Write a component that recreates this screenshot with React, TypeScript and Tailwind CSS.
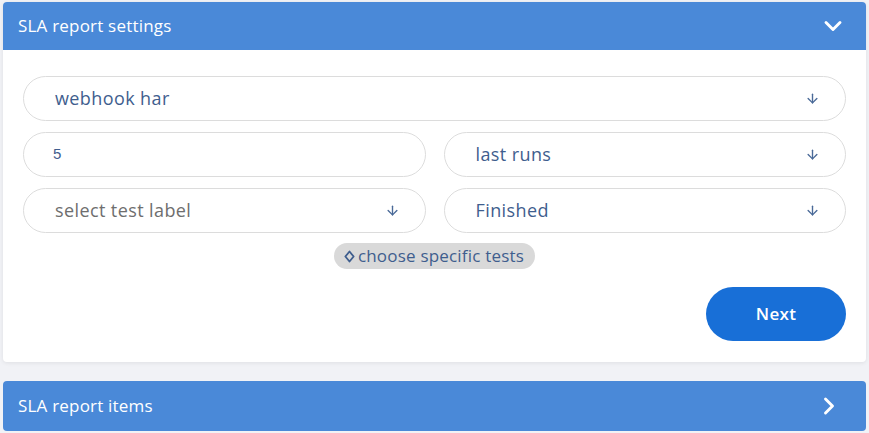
import { ChevronDown, ChevronRight, ArrowDown } from 'lucide-react';

const font = { fontFamily: '"Open Sans", "Liberation Sans", sans-serif' };

function SelectBox({ label, muted = false }: { label: string; muted?: boolean }) {
  return (
    <div className="flex h-[45px] w-full items-center justify-between rounded-full border border-[#dcdcdc] bg-white pl-[31px] pr-[25px]">
      <span className={`text-[18px] tracking-[0.4px] ${muted ? 'text-[#6e6e6e]' : 'text-[#3f5e8e]'}`}>{label}</span>
      <ArrowDown className="h-[15px] w-[15px] text-[#4a6a98]" strokeWidth={2.2} />
    </div>
  );
}

export default function App() {
  return (
    <div className="min-h-[433px] w-full bg-[#f1f2f6] px-[3px] pt-[2px]" style={font}>
      {/* Settings card */}
      <div className="overflow-hidden rounded-[4px] bg-white shadow-[0_1px_4px_rgba(0,0,0,0.08)]">
        <div className="flex h-[48px] items-center justify-between bg-[#4a89d8] pl-[15px] pr-[19px]">
          <span className="text-[17px] tracking-[0.2px] text-white">SLA report settings</span>
          <ChevronDown className="h-[28px] w-[28px] text-white" strokeWidth={2.5} />
        </div>

        <div className="flex flex-col gap-[11px] px-[20px] pb-[21px] pt-[26px]">
          <SelectBox label="webhook har" />

          <div className="grid grid-cols-2 gap-[18px]">
            <div className="flex h-[45px] items-center rounded-full border border-[#dcdcdc] bg-white pl-[29px]">
              <span className="text-[15px] text-[#3f5e8e]" style={{ fontFamily: '"Liberation Sans", sans-serif' }}>5</span>
            </div>
            <SelectBox label="last runs" />
          </div>

          <div className="grid grid-cols-2 gap-[18px]">
            <SelectBox label="select test label" muted />
            <SelectBox label="Finished" />
          </div>

          <div className="-mt-[1px] flex justify-center">
            <button className="flex h-[26px] items-center gap-[3px] rounded-full bg-[#d9d9d9] pl-[10px] pr-[11px] text-[17px] tracking-[0.2px] text-[#3f5e8e]">
              <svg viewBox="0 0 12 14" className="h-[13px] w-[11px]" fill="none" stroke="currentColor" strokeWidth={2}>
                <path d="M6 1.5 L10.5 7 L6 12.5 L1.5 7 Z" strokeLinejoin="round" />
              </svg>
              choose specific tests
            </button>
          </div>

          <div className="mt-[7px] flex justify-end">
            <button className="h-[54px] w-[140px] rounded-full bg-[#186fd7] text-[17px] font-semibold tracking-[0.3px] text-white">
              Next
            </button>
          </div>
        </div>
      </div>

      {/* Items card */}
      <div className="mt-[19px] flex h-[50px] items-center justify-between rounded-[4px] bg-[#4a89d8] pl-[15px] pr-[23px]">
        <span className="text-[17px] tracking-[0.2px] text-white">SLA report items</span>
        <ChevronRight className="h-[28px] w-[28px] text-white" strokeWidth={2.5} />
      </div>
    </div>
  );
}
